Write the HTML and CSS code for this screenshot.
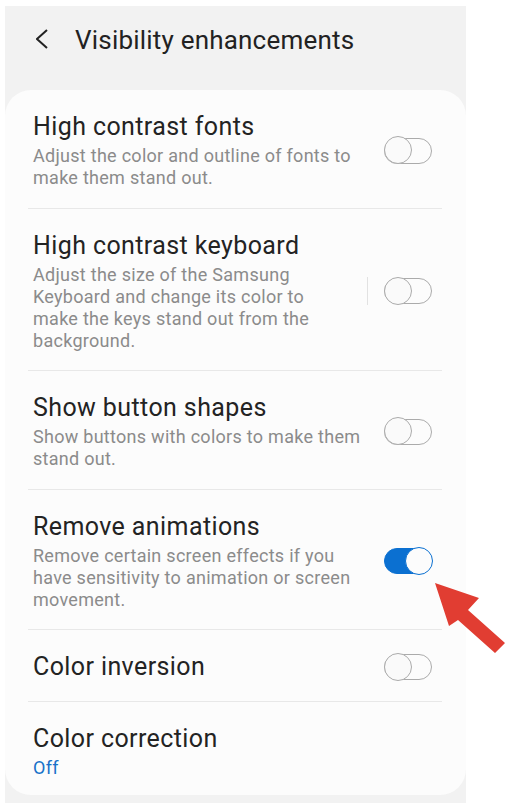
FILE: index.html
```html
<!DOCTYPE html>
<html lang="en">
<head>
<meta charset="utf-8">
<title>Visibility enhancements</title>
<link rel="stylesheet" href="styles.css">
</head>
<body>
<div class="screen">
  <header class="header">
    <svg class="back" width="12" height="20" viewBox="0 0 12 20"><polyline points="11,1 1,10 11,19" fill="none" stroke="#222" stroke-width="2"/></svg>
    <h1 class="title">Visibility enhancements</h1>
  </header>
  <main class="card">
    <div class="row">
      <div class="text">
        <div class="name">High contrast fonts</div>
        <div class="desc">Adjust the color and outline of fonts to<br>make them stand out.</div>
      </div>
      <span class="switch"></span>
    </div>
    <div class="row">
      <div class="text">
        <div class="name">High contrast keyboard</div>
        <div class="desc">Adjust the size of the Samsung<br>Keyboard and change its color to<br>make the keys stand out from the<br>background.</div>
      </div>
      <span class="vline"></span>
      <span class="switch"></span>
    </div>
    <div class="row">
      <div class="text">
        <div class="name">Show button shapes</div>
        <div class="desc">Show buttons with colors to make them<br>stand out.</div>
      </div>
      <span class="switch"></span>
    </div>
    <div class="row">
      <div class="text">
        <div class="name">Remove animations</div>
        <div class="desc">Remove certain screen effects if you<br>have sensitivity to animation or screen<br>movement.</div>
      </div>
      <span class="switch on"></span>
    </div>
    <div class="row">
      <div class="text">
        <div class="name">Color inversion</div>
      </div>
      <span class="switch"></span>
    </div>
    <div class="row last">
      <div class="text">
        <div class="name">Color correction</div>
        <div class="value">Off</div>
      </div>
    </div>
  </main>
</div>
<svg class="arrow" width="80" height="80" viewBox="430 578 80 80"><polygon points="435,583 479,598 468,610 505,643 495,653 458,620 449,626" fill="#e13d32"/></svg>
</body>
</html>
```
FILE: styles.css
```css
html, body {
  margin: 0;
  padding: 0;
  background: #ffffff;
}
body {
  font-family: Roboto, "Noto Sans", "Liberation Sans", sans-serif;
  width: 512px;
  height: 803px;
  overflow: hidden;
  position: relative;
}
.screen {
  margin: 6px 0 0 5px;
  width: 461px;
  height: 797px;
  background: #f2f2f2;
  display: flex;
  flex-direction: column;
}
.header {
  height: 84px;
  box-sizing: border-box;
  padding: 18px 0 0 31px;
  display: flex;
  align-items: flex-start;
  gap: 27px;
}
.back {
  margin-top: 5px;
  flex: none;
}
.title {
  margin: 0;
  font-size: 26px;
  line-height: 32px;
  font-weight: 400;
  letter-spacing: 0.2px;
  color: #222222;
}
.card {
  background: #fcfcfc;
  border-radius: 26px;
  padding: 0 24px 0 23px;
}
.row {
  display: flex;
  align-items: center;
  padding: 22px 10px 18.5px 5px;
  border-bottom: 1px solid #e8e8e8;
}
.row.last {
  border-bottom: none;
  padding-bottom: 16.5px;
}
.text {
  flex: 1;
}
.name {
  font-size: 25px;
  line-height: 30px;
  letter-spacing: 0.4px;
  color: #232323;
}
.desc {
  margin-top: 3px;
  font-size: 18px;
  line-height: 22px;
  letter-spacing: 0.28px;
  color: #8b8b8b;
}
.value {
  margin-top: 3px;
  font-size: 18px;
  line-height: 22px;
  letter-spacing: 0.28px;
  color: #1a72c9;
}
.vline {
  width: 1px;
  height: 28px;
  background: #e2e2e2;
  margin-right: 16px;
}
.switch {
  position: relative;
  flex: none;
  width: 48px;
  height: 26px;
  box-sizing: border-box;
  border: 1.5px solid #ababab;
  border-radius: 13px;
}
.switch::after {
  content: "";
  position: absolute;
  left: -1.5px;
  top: -2.5px;
  width: 28px;
  height: 28px;
  box-sizing: border-box;
  border: 1.5px solid #ababab;
  border-radius: 50%;
  background: #fafafa;
}
.switch.on {
  background: #0b70d1;
  border-color: #0b70d1;
}
.switch.on::after {
  left: auto;
  right: -1.5px;
  border-color: #0b70d1;
  background: #fcfcfc;
}
.arrow {
  position: absolute;
  left: 430px;
  top: 578px;
}
```
